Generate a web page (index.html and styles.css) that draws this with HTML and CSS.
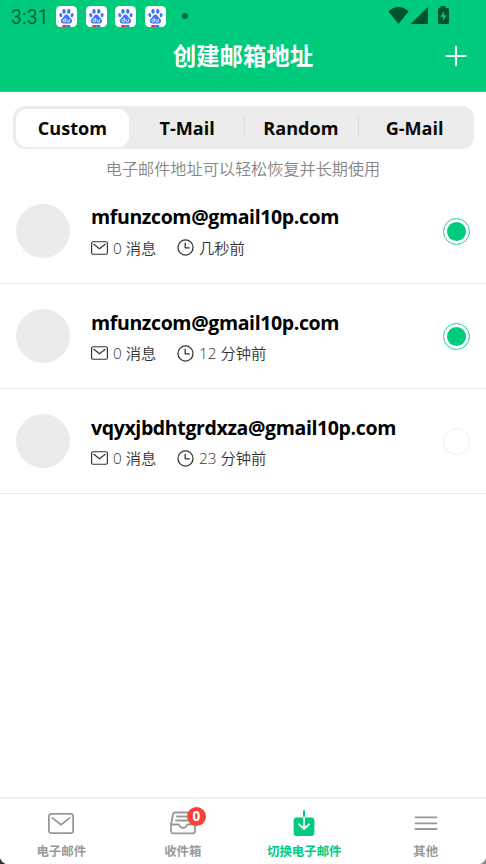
FILE: index.html
```html
<!DOCTYPE html>
<html lang="zh-CN">
<head>
<meta charset="utf-8">
<title>创建邮箱地址</title>
<link rel="stylesheet" href="styles.css">
</head>
<body>
<svg class="defs" width="0" height="0">
  <symbol id="paw" viewBox="0 0 21 21">
    <rect width="21" height="21" rx="4.5" fill="#fff"/>
    <g fill="#3c72f4">
      <ellipse cx="8" cy="5.4" rx="1.7" ry="2.3"/>
      <ellipse cx="12.8" cy="5.4" rx="1.7" ry="2.3"/>
      <ellipse cx="4.8" cy="9.2" rx="1.5" ry="2.1" transform="rotate(-15 4.8 9.2)"/>
      <ellipse cx="16.1" cy="9.2" rx="1.5" ry="2.1" transform="rotate(15 16.1 9.2)"/>
      <path d="M10.4 8.6c1.8 0 2.4 1.8 3.4 2.8 1.3 1.2 2.6 2.3 2.2 4-.5 2.2-2.7 2.2-5.6 2-2.9.2-5 .2-5.5-2-.4-1.7.9-2.8 2.1-4 1.1-1 1.6-2.8 3.4-2.8z"/>
    </g>
    <path d="M9.3 11.8v4H8a1.2 1.2 0 0 1 0-2.5h1.3M11 13v2.1q0 .7.7.7h1.7V13" fill="none" stroke="#fff" stroke-width=".8"/>
    <path d="M6.3 19h4.2v2H6.3z" fill="#e53a3a"/><path d="M10.5 19h3.8v2h-3.8z" fill="#3c72f4"/>
  </symbol>
  <symbol id="mail" viewBox="0 0 26 21">
    <rect x=".9" y=".9" width="24.2" height="19.2" rx="2.4"/>
    <path d="M4.3 4.9 13 11.7l8.7-6.8"/>
  </symbol>
  <symbol id="clock" viewBox="0 0 16 16">
    <circle cx="8" cy="8" r="7.1"/><path d="M7.7 3.8v4.5h3.9"/>
  </symbol>
</svg>
<div class="screen">
  <header class="header">
    <div class="status">
      <span class="time">3:31</span>
      <div class="apps">
        <svg><use href="#paw"/></svg><svg><use href="#paw"/></svg><svg><use href="#paw"/></svg><svg><use href="#paw"/></svg>
      </div>
      <i class="dot"></i>
      <svg class="signals" width="62" height="20" viewBox="0 0 62 20" fill="#005230">
        <path d="M.3 5.3Q10.5-3.2 20.7 5.3L10.5 18z"/>
        <path d="M40 1v17H22.5z"/>
        <path fill-rule="evenodd" d="M52.5 0h5v2h2q1.5 0 1.5 1.5v13q0 1.5-1.5 1.5h-8q-1.5 0-1.5-1.5v-13Q50 2 51.5 2h1zM56.2 5l-3.8 5.7h2.5v4.3l3.6-5.7h-2.3z"/>
      </svg>
    </div>
    <div class="titlebar">
      <h1>创建邮箱地址</h1>
      <svg class="plus" width="22" height="22" viewBox="0 0 22 22"><path d="M11 1.5v19M1.5 11h19"/></svg>
    </div>
  </header>
  <main>
    <div class="tabs">
      <span class="tab active">Custom</span><span class="tab">T-Mail</span><span class="tab split">Random</span><span class="tab split">G-Mail</span>
    </div>
    <p class="hint">电子邮件地址可以轻松恢复并长期使用</p>
    <ul class="list">
      <li class="row">
        <span class="avatar"></span>
        <div class="info"><b>mfunzcom@gmail10p.com</b>
          <div class="meta"><svg class="m-mail"><use href="#mail"/></svg><span class="count">0 消息</span><svg class="m-clock"><use href="#clock"/></svg><span>几秒前</span></div></div>
        <span class="radio on"></span>
      </li>
      <li class="row">
        <span class="avatar"></span>
        <div class="info"><b>mfunzcom@gmail10p.com</b>
          <div class="meta"><svg class="m-mail"><use href="#mail"/></svg><span class="count">0 消息</span><svg class="m-clock"><use href="#clock"/></svg><span>12 分钟前</span></div></div>
        <span class="radio on"></span>
      </li>
      <li class="row">
        <span class="avatar"></span>
        <div class="info"><b>vqyxjbdhtgrdxza@gmail10p.com</b>
          <div class="meta"><svg class="m-mail"><use href="#mail"/></svg><span class="count">0 消息</span><svg class="m-clock"><use href="#clock"/></svg><span>23 分钟前</span></div></div>
        <span class="radio"></span>
      </li>
    </ul>
  </main>
  <nav class="nav">
    <a class="item"><span class="icon"><svg width="26" height="21"><use href="#mail"/></svg></span>电子邮件</a>
    <a class="item"><span class="icon">
      <svg width="28" height="24" viewBox="0 0 28 24"><path d="M2 13.5 4 3.5Q4.4 1.5 6.4 1.5H21.5q2 0 2.4 2L26 13.5v6.5q0 2.3-2.3 2.3H4.3Q2 22.3 2 20zM2 13.5h7.2q.8 0 1 .8 1 2.7 3.8 2.7t3.8-2.7q.2-.8 1-.8H26M8 5.5h12M7 9.5h14"/></svg>
      <em class="badge">0</em></span>收件箱</a>
    <a class="item current"><span class="icon"><svg width="22" height="28" viewBox="0 0 22 28"><rect x=".6" y="8.5" width="20.8" height="18.5" rx="3" fill="#00cb7d" stroke="none"/><path d="M11 2v7" stroke="#00cb7d" stroke-width="2"/><path d="M11 8.5v11M6 15.3l5 4.7 5-4.7" stroke="#fff" stroke-width="1.8"/></svg></span>切换电子邮件</a>
    <a class="item"><span class="icon"><svg width="24" height="16" viewBox="0 0 24 16"><path d="M1.5 2.3h21M1.5 8.300h21M1.5 14h21"/></svg></span>其他</a>
  </nav>
  <i class="corner left"></i><i class="corner right"></i>
</div>
</body>
</html>
```
FILE: styles.css
```css
* { box-sizing: border-box; }
body { margin: 0; font-family: "Open Sans", "Noto Sans CJK SC", sans-serif; color: #090909; background: #fff; }
.defs { position: absolute; }
.screen { position: relative; width: 486px; height: 864px; overflow: hidden; display: flex; flex-direction: column; }
.header { height: 92px; flex: none; background: #00cb7d; border-bottom: 1px solid #25d18f; }
.status { height: 32px; padding: 2px 36px 0 11px; display: flex; align-items: center; }
.time { width: 45px; font: 400 19.5px/28px Roboto, sans-serif; color: #08643e; padding-top: 1px; }
.apps { display: flex; gap: 8.7px; margin-top: -2px; }
.apps svg { width: 21px; height: 21px; }
.dot { width: 6px; height: 6px; border-radius: 50%; background: #08643e; margin-left: 15.5px; margin-top: -2px; }
.signals { margin-left: auto; margin-top: -2px; }
.titlebar { height: 48px; position: relative; display: flex; justify-content: center; align-items: center; }
h1 { margin: -2px 0 0; font: 700 23.4px/34px "Noto Sans CJK SC", sans-serif; color: #fff; }
.plus { position: absolute; right: 19px; top: 13px; fill: none; stroke: #fff; stroke-width: 2; stroke-linecap: round; }
main { flex: 1; }
.tabs { margin: 14px 12px 0 13px; height: 43px; padding: 3px; border-radius: 12px; background: #ececec; display: flex; align-items: center; }
.tab { flex: 1; height: 38px; font-weight: 700; font-size: 18.1px; line-height: 38.5px; text-align: center; position: relative; left: .5px; }
.active { background: #fff; border-radius: 11px; margin: 0 1px 0 -1px; }
.split::before { content: ""; position: absolute; left: 0; top: 8px; width: 1px; height: 21px; background: #dcdcdc; }
.hint { margin: 5px 0 0; height: 24.6px; text-align: center; font: 350 16.15px/28px "Noto Sans CJK SC", sans-serif; color: #868686; }
.list { margin: 0; padding: 0; list-style: none; }
.row { height: 105.3px; padding: 0 16px; display: flex; align-items: center; border-bottom: 1.5px solid #eaeaea; }
.avatar { width: 54px; height: 54px; border-radius: 50%; background: #ebebeb; flex: none; }
.info { margin-left: 21px; flex: 1; padding-top: 3px; }
.info b { display: block; font-size: 19.5px; font-weight: 700; letter-spacing: -.37px; line-height: 31px; color: #000; }
.meta { display: flex; align-items: center; height: 31px; font-size: 15.3px; line-height: 22px; font-weight: 350; color: #333; white-space: nowrap; }
.meta svg { fill: none; stroke: #333; stroke-linecap: round; stroke-linejoin: round; margin-right: 5px; }
.m-mail { width: 17px; height: 14px; stroke-width: 1.8; }
.m-clock { width: 17px; height: 17px; stroke-width: 1.2; }
.count { width: 64px; }
.radio { width: 27px; height: 27px; border: 1.5px solid #efefef; border-radius: 50%; display: grid; place-items: center; flex: none; margin-top: 1px; }
.on { border-color: #20ce8b; }
.on::after { content: ""; width: 19px; height: 19px; border-radius: 50%; background: #00cb7d; }
.nav { height: 67px; border-top: 2px solid #f1f1f1; display: grid; grid-template-columns: repeat(4, 1fr); }
.item { display: flex; flex-direction: column; align-items: center; font: 700 12.4px/18px "Noto Sans CJK SC", sans-serif; color: #999; padding-left: 1px; }
.icon { position: relative; height: 43px; padding-top: 5px; display: flex; align-items: center; }
.icon svg { fill: none; stroke: #999; stroke-width: 1.8; stroke-linecap: round; stroke-linejoin: round; }
.badge { position: absolute; left: 18px; top: 8px; width: 19px; height: 19px; border-radius: 50%; background: #f84336; color: #fff; font: normal 700 13.5px/19px "Noto Sans", sans-serif; text-align: center; }
.current { color: #00cb7d; }
.corner { position: absolute; bottom: 0; width: 9px; height: 9px; }
.left { left: 0; background: radial-gradient(circle at 100% 0, transparent 9px, #333 10px); }
.right { right: 0; background: radial-gradient(circle at 0 0, transparent 9px, #888 10px); }
```
